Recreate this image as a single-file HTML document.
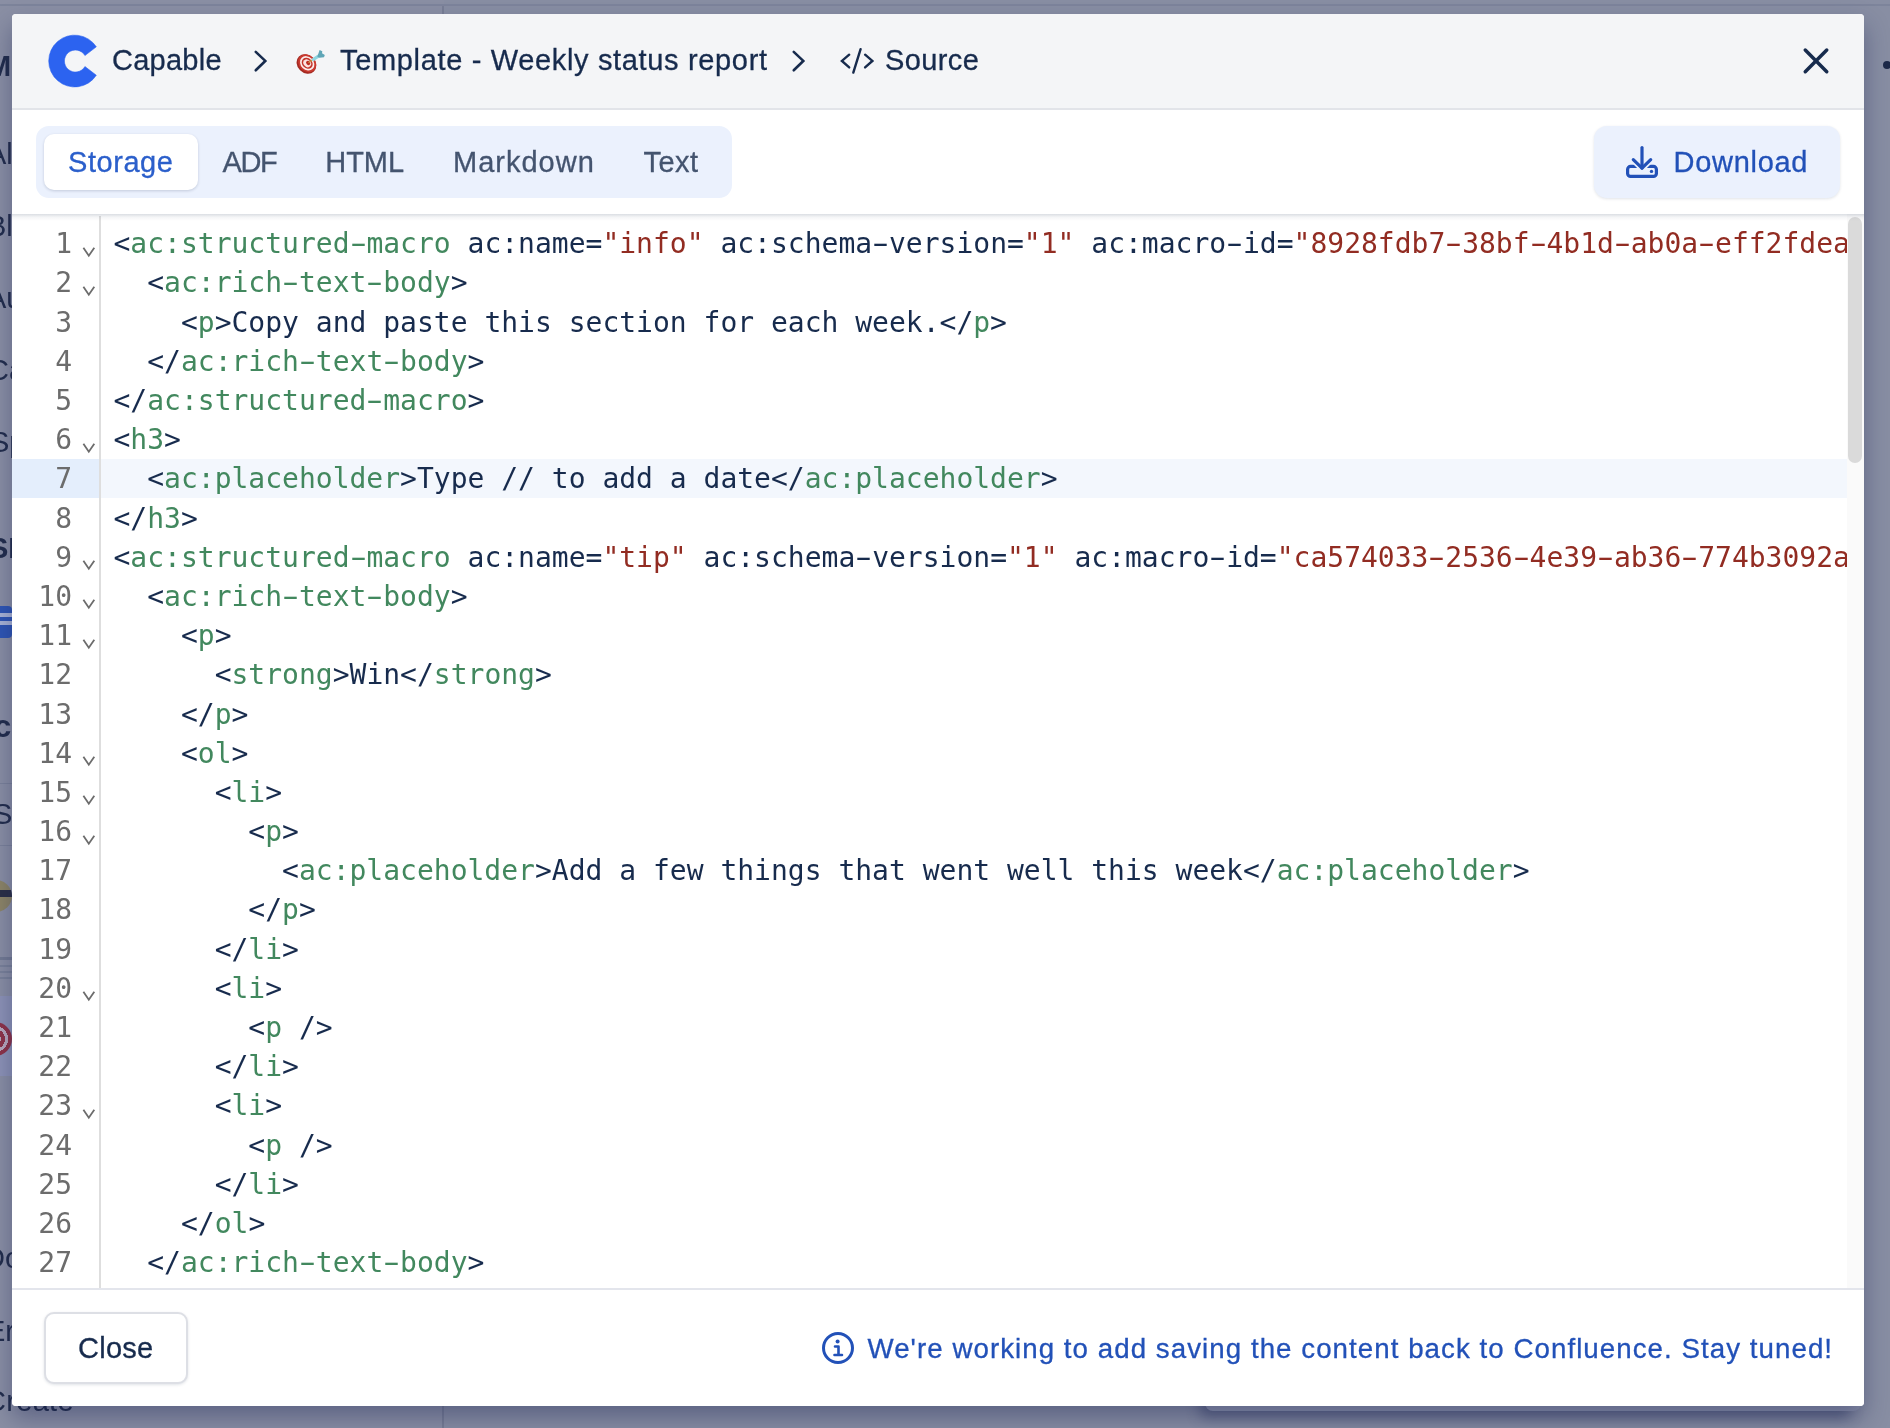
<!DOCTYPE html>
<html lang="en">
<head>
<meta charset="utf-8">
<title>Source - Template - Weekly status report</title>
<style>
*{box-sizing:border-box;margin:0;padding:0}
html,body{width:1890px;height:1428px;overflow:hidden}
body{background:#8a8fa4;font-family:"Liberation Sans",sans-serif;color:#172b4d;position:relative}
.bg{will-change:transform;position:absolute;left:0;top:0;width:1890px;height:1428px;overflow:hidden}
.bg .vline{position:absolute;left:442px;top:6px;width:2px;height:1422px;background:#787e95}
.bg .main{position:absolute;left:444px;top:0;width:1446px;height:1428px;background:#888ea3}
.bg .topline{position:absolute;left:0;top:4px;width:1890px;height:2px;background:#7d849b;z-index:2}
.bg .card{position:absolute;left:1205px;top:1300px;width:656px;height:111px;background:#8d93ab;border-radius:0 0 8px 8px;box-shadow:-8px 10px 14px -3px rgba(30,40,85,.42)}
.bg .dot{position:absolute;left:1883px;top:61px;width:8px;height:8px;border-radius:50%;background:#1d2949}
.bg .side span{position:absolute;left:-13px;font-size:29px;line-height:36px;color:#222d4b;white-space:nowrap}
.bg .side span.b{font-weight:bold}
.bg .side .sep{position:absolute;left:0;width:443px;height:1px;background:#7b8299}
.bg .side .hl{position:absolute;left:0;top:996px;width:443px;height:80px;background:#8d93b6}
.bg .side .ic1{position:absolute;left:-20px;top:606px;width:32px;height:32px;border-radius:4px;background:#2f56b4;
 background-image:linear-gradient(#2f56b4 0 7px,#a9b4d6 7px 11px,#2f56b4 11px 15px,#a9b4d6 15px 19px,#2f56b4 19px)}
.bg .side .ic2{position:absolute;left:-20px;top:880px;width:32px;height:32px;border-radius:50%;background:#8d8566;
 background-image:linear-gradient(#8d8566 0 10px,#2b2f45 10px 17px,#8d8566 17px)}
.bg .side .ic3{position:absolute;left:-16px;top:953px;width:28px;height:28px;
 background-image:linear-gradient(transparent 0 4px,#737b93 4px 7px,transparent 7px 12px,#7a8299 12px 14px,transparent 14px 18px,#7a8299 18px 20px,transparent 20px 24px,#7a8299 24px 26px,transparent 26px)}
.bg .side .ic4{position:absolute;left:-22px;top:1022px;width:34px;height:34px;border-radius:50%;
 background:radial-gradient(circle,#8f3348 0 3px,#b9a9bd 3px 6px,#8f3348 6px 10px,#b9a9bd 10px 13px,#8f3348 13px 17px)}
.modal{will-change:transform;position:absolute;left:12px;top:14px;width:1852px;height:1392px;background:#fff;border-radius:4px;overflow:hidden;
 box-shadow:0 12px 24px rgba(20,30,80,.38)}
.hdr{position:absolute;left:0;top:0;width:100%;height:96px;background:#f4f5f7;border-bottom:2px solid #e2e4e9}
.hdr .t{position:absolute;top:29px;font-size:29px;line-height:34px;white-space:nowrap;color:#172b4d}
.hdr svg{position:absolute}
.tool{position:absolute;left:0;top:96px;width:100%;height:104px;background:#fff;z-index:3}
.tool:after{content:"";position:absolute;left:0;top:104px;width:100%;height:7px;background:linear-gradient(rgba(9,30,66,.15),rgba(9,30,66,.045) 45%,rgba(9,30,66,0))}
.tabs{position:absolute;left:24px;top:16px;width:696px;height:72px;background:#ebf1fd;border-radius:13px}
.tab{position:absolute;top:19px;font-size:29px;line-height:34px;color:#44546f;white-space:nowrap}
.tab.on{color:#2b5fcb}
.tabon{position:absolute;left:8px;top:8px;width:154px;height:56px;background:#fff;border-radius:10px;box-shadow:0 1px 3px rgba(9,30,66,.18)}
.dl{position:absolute;left:1582px;top:16px;width:246px;height:72px;background:#ebf1fd;border-radius:13px;box-shadow:0 1px 3px rgba(9,30,66,.12)}
.dl span{letter-spacing:.69px;position:absolute;left:79.6px;top:19px;font-size:29px;line-height:34px;color:#2251b8;white-space:nowrap}
.dl svg{position:absolute;left:30px;top:17px}
.ed{position:absolute;left:0;top:200px;width:100%;height:1074px;background:#fff;overflow:hidden;
 font-family:"DejaVu Sans Mono","Liberation Mono",monospace;font-size:28px;line-height:39.2px}
.gut{position:absolute;left:0;top:2px;padding-top:8.3px;width:89px;height:1200px;border-right:2px solid #dedede;color:#6c6c6c}
.gl{height:39.2px;position:relative}

.gl .ln{position:absolute;right:27px;top:0}
.gl .fold{position:absolute;left:70px;top:21.5px;width:14px;height:12px;fill:none;stroke:#6c6c6c;stroke-width:1.8}
.hl1{position:absolute;left:0;top:245px;width:87px;height:39.2px;background:#e4eefc}
.hl2{position:absolute;left:89px;top:245px;width:1747px;height:39.2px;background:#f3f7fd}
.code{position:absolute;left:89px;top:10.3px;width:1747px;height:1200px;overflow:hidden;color:#172b4d}
.cl{height:39.2px;padding-left:12.5px;white-space:pre}
.cl i{font-style:normal;display:inline-block;transform:scaleX(1.75)}

.t{color:#42885e}
.hdr .t,.tab,.dl span,.close span,.info{-webkit-text-stroke:.3px currentColor}
.hdr .t{color:#172b4d}
.s{color:#922c22}
.sb{position:absolute;left:1835px;top:0;width:17px;height:1074px;background:#fafafa}
.sb i{position:absolute;left:.7px;top:3px;width:14.8px;height:246px;border-radius:7px;background:#dadada}
.ftr{position:absolute;left:0;top:1274px;width:100%;height:118px;background:#fff;border-top:2px solid #e3e5ec;z-index:3}
.close{position:absolute;left:32px;top:22px;width:144px;height:72px;border:2px solid #dddfe5;border-radius:10px;background:#fff;box-shadow:0 1px 3px rgba(9,30,66,.12)}
.close span{letter-spacing:.25px;position:absolute;left:32.1px;top:17px;font-size:29px;line-height:34px;color:#172b4d}
.info{letter-spacing:1.046px;position:absolute;left:855.5px;top:42px;font-size:27.7px;line-height:34px;color:#2251b8;white-space:nowrap}
.ftr svg{position:absolute;left:808px;top:40px}
</style>
</head>
<body>
<div class="bg">
 <div class="topline"></div>
 <div class="main"></div>
 <div class="vline"></div>
 <div class="dot"></div>
 <div class="card"></div>
 <div class="side">
  <div class="hl"></div>
  <div class="sep" style="top:783px"></div><div class="sep" style="top:845px"></div>
  <span class="b" style="top:48px;left:-13px">M</span><span style="top:136px">Al</span><span style="top:208px">Bl</span>
  <span style="top:280px">Au</span><span style="top:352px;left:-12px">Ca</span><span style="top:424px;left:-10px">Sp</span>
  <span class="b" style="top:530px;left:-11px">SH</span><span class="b" style="top:709px;left:-6px;font-size:31px">cc</span><span style="top:796px;left:-7px">Se</span>
  <span style="top:1240px;left:-16px">Do</span><span style="top:1313px;left:-14px">Er</span><span style="top:1383px;left:-15px;letter-spacing:.3px">Create</span>
  <div class="ic1"></div><div class="ic2"></div><div class="ic3"></div><div class="ic4"></div>
 </div>
</div>
<div class="modal">
 <div class="hdr">
  <svg style="left:34px;top:19px" width="54" height="56" viewBox="0 0 54 56"><path d="M50.3 13.84 A25.9 25.9 0 1 0 50.3 42.24 L38.93 33.54 A11 11 0 1 1 38.93 22.54 Z" fill="#2c63f0" stroke="#2c63f0" stroke-width=".6" stroke-linejoin="round"/></svg>
  <span class="t" style="left:100px;letter-spacing:.25px">Capable</span>
  <svg style="left:240px;top:35px" width="16" height="24" viewBox="0 0 16 24"><path d="M3.75 2.9 L13.3 11.9 L3.75 21.3" fill="none" stroke="#172b4d" stroke-width="2.6" stroke-linecap="round" stroke-linejoin="miter"/></svg>
  <svg style="left:283px;top:33px" width="32" height="30" viewBox="0 0 32 30"><g transform="rotate(45 11.4 17)"><ellipse cx="11.4" cy="17" rx="10.6" ry="9" fill="#a42a22"/></g><g transform="rotate(45 12.2 16.3)"><ellipse cx="12.2" cy="16.300" rx="9.8" ry="8.2" fill="#c93a30"/><ellipse cx="12.2" cy="16.300" rx="7.800" ry="6.500" fill="#fbeceb"/><ellipse cx="12.2" cy="16.300" rx="6" ry="5" fill="#c2352b"/><ellipse cx="12.2" cy="16.300" rx="4.200" ry="3.500" fill="#fbe2df"/></g><g transform="rotate(45 13.2 15.95)"><ellipse cx="13.2" cy="15.950" rx="2.300" ry="1.900" fill="#bd2d24"/></g><path d="M14 15.300 L17 13.300" stroke="#c9a24a" stroke-width="1.300" stroke-linecap="round"/><path d="M18.300 12.500 L23.800 8.800" stroke="#8fd5e0" stroke-width="3.200" stroke-linecap="round"/><path d="M22.300 9.800 L24.600 3 L27.300 4.200 L27 6.300 L29.800 8 L29 10.200 L24.500 10.800 Z" fill="#5fa6b7"/></svg>
  <span class="t" style="left:328px;letter-spacing:.66px">Template - Weekly status report</span>
  <svg style="left:778px;top:35px" width="16" height="24" viewBox="0 0 16 24"><path d="M3.75 2.9 L13.3 11.9 L3.75 21.3" fill="none" stroke="#172b4d" stroke-width="2.6" stroke-linecap="round" stroke-linejoin="miter"/></svg>
  <svg style="left:827px;top:33px" width="36" height="28" viewBox="0 0 36 28"><path d="M10.2 7.700 L2.900 13.900 L10.2 20.400 M26.100 7.700 L33.400 13.900 L26.100 20.400 M21.600 2.200 L14.300 25.600" fill="none" stroke="#172b4d" stroke-width="2.400" stroke-linecap="round" stroke-linejoin="miter"/></svg>
  <span class="t" style="left:873px;letter-spacing:.4px">Source</span>
  <svg style="left:1788px;top:31px" width="32" height="32" viewBox="0 0 32 32"><path d="M5.25 5.1 L26.75 26.750 M26.75 5.1 L5.25 26.750" fill="none" stroke="#172b4d" stroke-width="3.500" stroke-linecap="round"/></svg>
 </div>
 <div class="tool">
  <div class="tabs">
   <div class="tabon"></div>
   <span class="tab on" style="left:32px;letter-spacing:.55px">Storage</span>
   <span class="tab" style="left:186.5px;letter-spacing:-1.4px">ADF</span>
   <span class="tab" style="left:289.3px;letter-spacing:-.07px">HTML</span>
   <span class="tab" style="left:417px;letter-spacing:1px">Markdown</span>
   <span class="tab" style="left:607.4px;letter-spacing:.53px">Text</span>
  </div>
  <div class="dl">
   <svg width="40" height="40" viewBox="0 0 40 40"><g fill="none" stroke="#2251b8" stroke-width="3.2" stroke-linejoin="round"><path d="M14 23.4 H6.6 a3 3 0 0 0 -3 3 V30.400 a3 3 0 0 0 3 3 H29.400 a3 3 0 0 0 3 -3 V26.400 a3 3 0 0 0 -3 -3 H22"/><path d="M9.3 16.700 L18 25.200 L26.700 16.700" stroke="#ebf1fd" stroke-width="6.600" stroke-linecap="round"/><path d="M18 4.600 V25" stroke-linecap="round"/><path d="M9.300 16.700 L18 25.200 L26.700 16.700" stroke-linecap="round"/></g><circle cx="27.500" cy="28.400" r="1.700" fill="#2251b8"/></svg>
   <span>Download</span>
  </div>
 </div>
 <div class="ed">
  <div class="hl1"></div><div class="hl2"></div>
  <div class="gut">
<div class="gl"><span class="ln">1</span><svg class="fold" viewBox="0 0 14 12"><path d="M1.4 1.7 L6.8 9.7 L12.3 1.7"/></svg></div>
<div class="gl"><span class="ln">2</span><svg class="fold" viewBox="0 0 14 12"><path d="M1.4 1.7 L6.8 9.7 L12.3 1.7"/></svg></div>
<div class="gl"><span class="ln">3</span></div>
<div class="gl"><span class="ln">4</span></div>
<div class="gl"><span class="ln">5</span></div>
<div class="gl"><span class="ln">6</span><svg class="fold" viewBox="0 0 14 12"><path d="M1.4 1.7 L6.8 9.7 L12.3 1.7"/></svg></div>
<div class="gl act"><span class="ln">7</span></div>
<div class="gl"><span class="ln">8</span></div>
<div class="gl"><span class="ln">9</span><svg class="fold" viewBox="0 0 14 12"><path d="M1.4 1.7 L6.8 9.7 L12.3 1.7"/></svg></div>
<div class="gl"><span class="ln">10</span><svg class="fold" viewBox="0 0 14 12"><path d="M1.4 1.7 L6.8 9.7 L12.3 1.7"/></svg></div>
<div class="gl"><span class="ln">11</span><svg class="fold" viewBox="0 0 14 12"><path d="M1.4 1.7 L6.8 9.7 L12.3 1.7"/></svg></div>
<div class="gl"><span class="ln">12</span></div>
<div class="gl"><span class="ln">13</span></div>
<div class="gl"><span class="ln">14</span><svg class="fold" viewBox="0 0 14 12"><path d="M1.4 1.7 L6.8 9.7 L12.3 1.7"/></svg></div>
<div class="gl"><span class="ln">15</span><svg class="fold" viewBox="0 0 14 12"><path d="M1.4 1.7 L6.8 9.7 L12.3 1.7"/></svg></div>
<div class="gl"><span class="ln">16</span><svg class="fold" viewBox="0 0 14 12"><path d="M1.4 1.7 L6.8 9.7 L12.3 1.7"/></svg></div>
<div class="gl"><span class="ln">17</span></div>
<div class="gl"><span class="ln">18</span></div>
<div class="gl"><span class="ln">19</span></div>
<div class="gl"><span class="ln">20</span><svg class="fold" viewBox="0 0 14 12"><path d="M1.4 1.7 L6.8 9.7 L12.3 1.7"/></svg></div>
<div class="gl"><span class="ln">21</span></div>
<div class="gl"><span class="ln">22</span></div>
<div class="gl"><span class="ln">23</span><svg class="fold" viewBox="0 0 14 12"><path d="M1.4 1.7 L6.8 9.7 L12.3 1.7"/></svg></div>
<div class="gl"><span class="ln">24</span></div>
<div class="gl"><span class="ln">25</span></div>
<div class="gl"><span class="ln">26</span></div>
<div class="gl"><span class="ln">27</span></div>
<div class="gl"><span class="ln">28</span></div>
  </div>
  <div class="code">
<div class="cl">&lt;<span class="t">ac:structured<i>-</i>macro</span> ac:name=<span class="s">"info"</span> ac:schema<i>-</i>version=<span class="s">"1"</span> ac:macro<i>-</i>id=<span class="s">"8928fdb7<i>-</i>38bf<i>-</i>4b1d<i>-</i>ab0a<i>-</i>eff2fdea9a1c"</span>&gt;</div>
<div class="cl">  &lt;<span class="t">ac:rich<i>-</i>text<i>-</i>body</span>&gt;</div>
<div class="cl">    &lt;<span class="t">p</span>&gt;Copy and paste this section for each week.&lt;/<span class="t">p</span>&gt;</div>
<div class="cl">  &lt;/<span class="t">ac:rich<i>-</i>text<i>-</i>body</span>&gt;</div>
<div class="cl">&lt;/<span class="t">ac:structured<i>-</i>macro</span>&gt;</div>
<div class="cl">&lt;<span class="t">h3</span>&gt;</div>
<div class="cl act">  &lt;<span class="t">ac:placeholder</span>&gt;Type // to add a date&lt;/<span class="t">ac:placeholder</span>&gt;</div>
<div class="cl">&lt;/<span class="t">h3</span>&gt;</div>
<div class="cl">&lt;<span class="t">ac:structured<i>-</i>macro</span> ac:name=<span class="s">"tip"</span> ac:schema<i>-</i>version=<span class="s">"1"</span> ac:macro<i>-</i>id=<span class="s">"ca574033<i>-</i>2536<i>-</i>4e39<i>-</i>ab36<i>-</i>774b3092a5d7"</span>&gt;</div>
<div class="cl">  &lt;<span class="t">ac:rich<i>-</i>text<i>-</i>body</span>&gt;</div>
<div class="cl">    &lt;<span class="t">p</span>&gt;</div>
<div class="cl">      &lt;<span class="t">strong</span>&gt;Win&lt;/<span class="t">strong</span>&gt;</div>
<div class="cl">    &lt;/<span class="t">p</span>&gt;</div>
<div class="cl">    &lt;<span class="t">ol</span>&gt;</div>
<div class="cl">      &lt;<span class="t">li</span>&gt;</div>
<div class="cl">        &lt;<span class="t">p</span>&gt;</div>
<div class="cl">          &lt;<span class="t">ac:placeholder</span>&gt;Add a few things that went well this week&lt;/<span class="t">ac:placeholder</span>&gt;</div>
<div class="cl">        &lt;/<span class="t">p</span>&gt;</div>
<div class="cl">      &lt;/<span class="t">li</span>&gt;</div>
<div class="cl">      &lt;<span class="t">li</span>&gt;</div>
<div class="cl">        &lt;<span class="t">p</span> /&gt;</div>
<div class="cl">      &lt;/<span class="t">li</span>&gt;</div>
<div class="cl">      &lt;<span class="t">li</span>&gt;</div>
<div class="cl">        &lt;<span class="t">p</span> /&gt;</div>
<div class="cl">      &lt;/<span class="t">li</span>&gt;</div>
<div class="cl">    &lt;/<span class="t">ol</span>&gt;</div>
<div class="cl">  &lt;/<span class="t">ac:rich<i>-</i>text<i>-</i>body</span>&gt;</div>
<div class="cl">&lt;/<span class="t">ac:structured<i>-</i>macro</span>&gt;</div>
  </div>
  <div class="sb"><i></i></div>
 </div>
 <div class="ftr">
  <div class="close"><span>Close</span></div>
  <svg width="36" height="36" viewBox="0 0 36 36"><circle cx="18" cy="18" r="14.500" fill="none" stroke="#2251b8" stroke-width="3"/><circle cx="17.600" cy="11.600" r="2" fill="#2251b8"/><path d="M15 16.500 H18.500 V25 M14.500 25 H22" fill="none" stroke="#2251b8" stroke-width="2.600" stroke-linecap="round" stroke-linejoin="round"/></svg>
  <span class="info">We're working to add saving the content back to Confluence. Stay tuned!</span>
 </div>
</div>
</body>
</html>
